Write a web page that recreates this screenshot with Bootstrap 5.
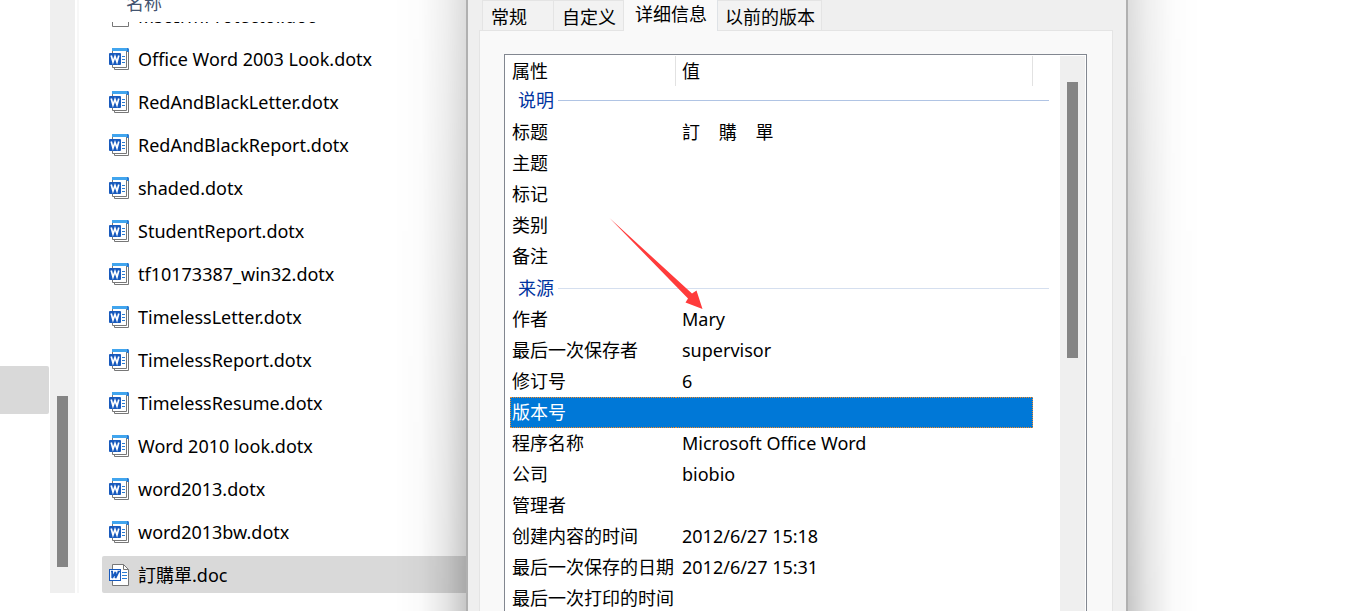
<!DOCTYPE html>
<html lang="zh-CN">
<head>
<meta charset="utf-8">
<meta name="viewport" content="width=device-width, initial-scale=1">
<title>属性</title>
<link href="https://cdn.jsdelivr.net/npm/bootstrap@5.3.0/dist/css/bootstrap.min.css" rel="stylesheet">
<style>
  body { font-family: "Noto Sans", "Noto Sans CJK SC", sans-serif; font-size: 18px; line-height: 30px; color: #000; background: #fff; }
  .explorer { flex: 0 0 466px; padding-bottom: 18px; }
  .tree-pane { flex: 0 0 50px; }
  .tree-selected { width: 49px; height: 48px; margin-top: 366px; background: #d9d9d9; border-radius: 0 2px 2px 0; }
  .scroll-track { flex: 0 0 25px; background: #efefef; }
  .scroll-thumb { width: 11px; background: #858585; }
  .tree-thumb { height: 171px; margin-top: 396px; }
  .pane-divider { flex: 0 0 2px; margin-left: 2px; background: #f7f7f7; }
  .file-pane { min-width: 0; padding-left: 23px; }
  .column-head { flex: 0 0 22px; padding-left: 24px; color: #44546f; line-height: 6px; }
  .file-list { gap: 6px; min-height: 0; }
  .file-row { flex: 0 0 37px; padding-left: 7px; gap: 9px; color: #000; text-decoration: none; white-space: nowrap; border-radius: 2px 0 0 2px; }
  .file-row.selected { background: #d9d9d9; }
  .file-row svg { flex: none; }
  .dialog-window { background: #efefef; border: solid #b0b0b0; border-width: 0 2px; padding: 0 13px 0 11px; }
  .dialog-window::before, .dialog-window::after { content: ""; position: absolute; top: 0; bottom: 0; width: 72px; -webkit-mask-image: linear-gradient(rgba(0,0,0,.6), #000); mask-image: linear-gradient(rgba(0,0,0,.6), #000); pointer-events: none; }
  .dialog-window::before { right: 100%; margin-right: 2px; background: linear-gradient(to left, rgba(0,0,0,.22), rgba(0,0,0,.1) 28%, rgba(0,0,0,.02) 62%, transparent); }
  .dialog-window::after { left: 100%; margin-left: 2px; background: linear-gradient(to right, rgba(0,0,0,.22), rgba(0,0,0,.1) 28%, rgba(0,0,0,.02) 62%, transparent); }
  .tab-strip { height: 30px; padding-left: 3px; --bs-nav-tabs-border-width: 0; }
  .tab-strip .nav-link { height: 30px; padding: 2px 7px 0 8px; color: #000; line-height: 28px; background: #f2f2f2; border: solid #e4e4e4; border-width: 1px 1px 0 0; border-radius: 0; margin: 0; white-space: nowrap; }
  .tab-strip .nav-link.tab-first { padding-right: 26px; border-left-width: 1px; }
  .tab-strip .nav-link.tab-last { padding-left: 7px; padding-right: 6px; }
  .tab-strip .nav-link.active { position: relative; height: 31px; padding: 0 10px 4px 11px; line-height: 26px; color: #000; background: #f9f9f9; border-top-width: 0; }
  .tab-panel { min-height: 0; background: #f9f9f9; border: solid #e4e4e4; border-width: 1px 1px 0; padding: 23px 25px 0 24px; }
  .details-box { background: #fff; border: solid #828790; border-width: 1px 1px 0; padding: 1px 1px 0 5px; }
  .details-table { flex: 1 1 0; min-width: 0; margin-right: 11px; table-layout: fixed; border-collapse: separate; border-spacing: 0; align-self: flex-start; }
  .details-table th, .details-table td { height: 31px; padding: 0 0 0 2px; line-height: 29px; font-weight: 400; white-space: nowrap; }
  .details-table thead th { height: 30px; border-right: 1px solid #e2e2e2; }
  .details-table td, .details-table thead th + th { padding-left: 6px; }
  .details-table thead th:last-child { border: 0; }
  .details-table .group-row th { padding-left: 8px; color: #0033a0; vertical-align: top; }
  .details-table .group-gap th { height: 32px; padding-top: 2px; }
  .group-rule { height: 1px; margin-left: 4px; background: #b0c4e4; }
  .group-gap .group-rule { background: #d5dfef; }
  .col-name { width: 166px; }
  .col-tail { width: 16px; }
  .selected-row { color: #fff; }
  .selected-row th, .selected-row td { border: dotted #f58c28; border-width: 0; background: #0078d7; }
  .selected-row th { border-width: 1px 0 1px 1px; }
  .details-table .selected-row th { padding-left: 1px; }
  .selected-row td { border-width: 1px 1px 1px 0; }
  .details-table .selected-row .tail-cell { border: 0; background: none; }
  .details-table .value-wide { white-space: pre; }
  .details-thumb { height: 276px; margin-top: 26px; }
  .desktop-edge { flex: 0 0 225px; }
  .pointer-arrow { position: absolute; left: 140px; top: 216px; pointer-events: none; }
</style>
</head>
<body>
<svg class="d-none" xmlns="http://www.w3.org/2000/svg">
  <symbol id="icon-dotx" viewBox="0 0 20 22">
    <path d="M5.500 19V21.500H19.500V4" fill="#fff" stroke="#777" />
    <path d="M3.500 1V19.500H17.500V1" fill="#fff" stroke="#777"/>
    <path d="M3 0H19L20 3V4H18V3H3z" fill="#41a5ee"/>
    <path d="M18 0H19L20 1V4H18z" fill="#2b7cd3"/>
    <rect y="5" width="12" height="12" rx="1" fill="#185abd"/>
    <path d="M2.200 7.500L4 14L6 8.500L8 14L9.800 7.500" fill="none" stroke="#fff" stroke-width="1.700"/>
    <path d="M13 8.500H16M13 11.500H16M13 14.500H16" stroke="#2b7cd3"/>
  </symbol>
  <symbol id="icon-doc" viewBox="0 0 20 22">
    <path d="M3.500 .5H14.500L19.500 5.500V21.500H3.500z" fill="#fff" stroke="#777"/>
    <path d="M14.500 .5V5.500H19.500" fill="none" stroke="#777"/>
    <rect x=".5" y="5.500" width="11" height="11" fill="#fff" stroke="#185abd"/>
    <path d="M2 7.500H4M3.200 7.500V14L6.500 8V14L9.700 7.500M8.500 7.500H11" fill="none" stroke="#185abd" stroke-width="1.700"/>
    <path d="M13 8.500H18M13 11.500H18M13 14.500H18" stroke="#2b7cd3"/>
  </symbol>
</svg>
<main class="d-flex vh-100 overflow-hidden">
  <section class="explorer d-flex">
    <div class="tree-pane"><div class="tree-selected"></div></div>
    <div class="scroll-track d-flex justify-content-center align-items-start"><div class="scroll-thumb tree-thumb"></div></div>
    <div class="pane-divider"></div>
    <div class="file-pane flex-grow-1 d-flex flex-column">
      <div class="column-head">名称</div>
      <nav class="file-list flex-grow-1 d-flex flex-column justify-content-end overflow-hidden">
        <a href="#" class="file-row d-flex align-items-center"><svg width="20" height="22"><use href="#icon-doc"/></svg>MsoIrmProtector.doc</a>
        <a href="#" class="file-row d-flex align-items-center"><svg width="20" height="22"><use href="#icon-dotx"/></svg>Office Word 2003 Look.dotx</a>
        <a href="#" class="file-row d-flex align-items-center"><svg width="20" height="22"><use href="#icon-dotx"/></svg>RedAndBlackLetter.dotx</a>
        <a href="#" class="file-row d-flex align-items-center"><svg width="20" height="22"><use href="#icon-dotx"/></svg>RedAndBlackReport.dotx</a>
        <a href="#" class="file-row d-flex align-items-center"><svg width="20" height="22"><use href="#icon-dotx"/></svg>shaded.dotx</a>
        <a href="#" class="file-row d-flex align-items-center"><svg width="20" height="22"><use href="#icon-dotx"/></svg>StudentReport.dotx</a>
        <a href="#" class="file-row d-flex align-items-center"><svg width="20" height="22"><use href="#icon-dotx"/></svg>tf10173387_win32.dotx</a>
        <a href="#" class="file-row d-flex align-items-center"><svg width="20" height="22"><use href="#icon-dotx"/></svg>TimelessLetter.dotx</a>
        <a href="#" class="file-row d-flex align-items-center"><svg width="20" height="22"><use href="#icon-dotx"/></svg>TimelessReport.dotx</a>
        <a href="#" class="file-row d-flex align-items-center"><svg width="20" height="22"><use href="#icon-dotx"/></svg>TimelessResume.dotx</a>
        <a href="#" class="file-row d-flex align-items-center"><svg width="20" height="22"><use href="#icon-dotx"/></svg>Word 2010 look.dotx</a>
        <a href="#" class="file-row d-flex align-items-center"><svg width="20" height="22"><use href="#icon-dotx"/></svg>word2013.dotx</a>
        <a href="#" class="file-row d-flex align-items-center"><svg width="20" height="22"><use href="#icon-dotx"/></svg>word2013bw.dotx</a>
        <a href="#" class="file-row selected d-flex align-items-center"><svg width="20" height="22"><use href="#icon-doc"/></svg>訂購單.doc</a>
      </nav>
    </div>
  </section>

  <section class="dialog-window position-relative flex-grow-1 d-flex flex-column">
    <div class="tab-strip nav nav-tabs flex-nowrap" role="tablist">
      <button class="nav-link tab-first" type="button" role="tab">常规</button>
      <button class="nav-link" type="button" role="tab">自定义</button>
      <button class="nav-link active" type="button" role="tab" aria-selected="true">详细信息</button>
      <button class="nav-link tab-last" type="button" role="tab">以前的版本</button>
    </div>
    <div class="tab-panel flex-grow-1 d-flex">
      <div class="details-box flex-grow-1 d-flex">
        <table class="details-table">
          <colgroup><col class="col-name"><col><col class="col-tail"></colgroup>
          <thead><tr><th>属性</th><th>值</th><th></th></tr></thead>
          <tbody>
            <tr class="group-row"><th colspan="3"><div class="d-flex align-items-center">说明<span class="group-rule flex-grow-1"></span></div></th></tr>
            <tr><th>标题</th><td class="value-wide">訂    購    單</td><td></td></tr>
            <tr><th>主题</th><td></td><td></td></tr>
            <tr><th>标记</th><td></td><td></td></tr>
            <tr><th>类别</th><td></td><td></td></tr>
            <tr><th>备注</th><td></td><td></td></tr>
            <tr class="group-row group-gap"><th colspan="3"><div class="d-flex align-items-center">来源<span class="group-rule flex-grow-1"></span></div></th></tr>
            <tr><th>作者</th><td>Mary</td><td></td></tr>
            <tr><th>最后一次保存者</th><td>supervisor</td><td></td></tr>
            <tr><th>修订号</th><td>6</td><td></td></tr>
            <tr class="selected-row"><th>版本号</th><td></td><td class="tail-cell"></td></tr>
            <tr><th>程序名称</th><td>Microsoft Office Word</td><td></td></tr>
            <tr><th>公司</th><td>biobio</td><td></td></tr>
            <tr><th>管理者</th><td></td><td></td></tr>
            <tr><th>创建内容的时间</th><td>2012/6/27 15:18</td><td></td></tr>
            <tr><th>最后一次保存的日期</th><td>2012/6/27 15:31</td><td></td></tr>
            <tr><th>最后一次打印的时间</th><td></td><td></td></tr>
          </tbody>
        </table>
        <div class="scroll-track d-flex justify-content-center align-items-start"><div class="scroll-thumb details-thumb"></div></div>
      </div>
    </div>
    <svg class="pointer-arrow" width="96" height="96" viewBox="608 216 96 96" aria-hidden="true"><path d="M609.500 218L692 293.500L696.500 290.500L702.500 309L685.500 302.500L688 298.500z" fill="#ff3b3b"/></svg>
  </section>
  <div class="desktop-edge"></div>
</main>
<script src="https://cdn.jsdelivr.net/npm/bootstrap@5.3.0/dist/js/bootstrap.bundle.min.js"></script>
</body>
</html>
